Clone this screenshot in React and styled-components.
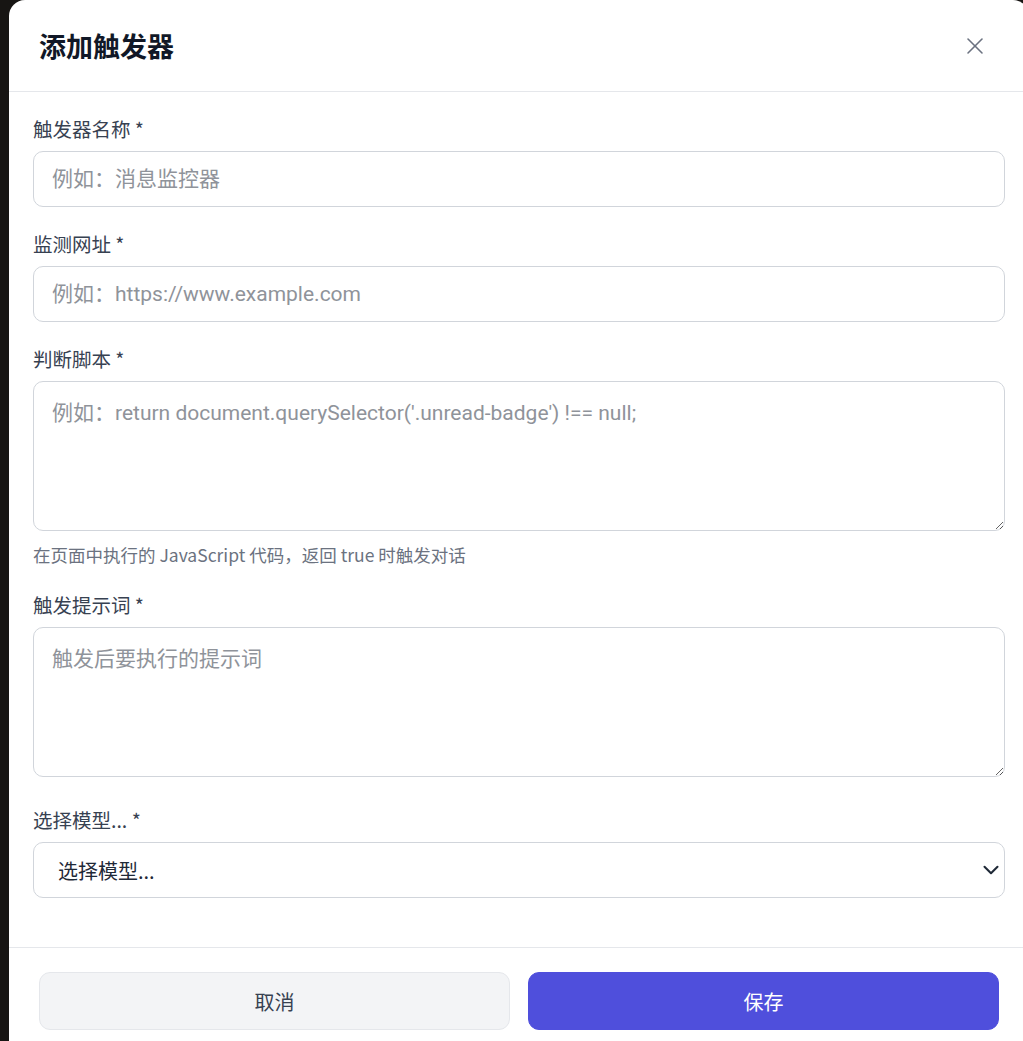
import React from "react";
import styled, { createGlobalStyle } from "styled-components";
import { X, ChevronDown } from "lucide-react";

const Global = createGlobalStyle`
  html, body { margin: 0; padding: 0; }
  body {
    background: #171513;
    overflow: hidden;
    font-family: "Noto Sans", "Noto Sans CJK SC", sans-serif;
  }
  * { box-sizing: border-box; }
`;

const Page = styled.div`
  height: 1041px;
  padding-left: 9px;
  overflow: hidden;
`;

const Modal = styled.div`
  width: 1020px;
  background: #ffffff;
  border-radius: 16px;
  display: flex;
  flex-direction: column;
`;

const Header = styled.header`
  height: 92px;
  border-bottom: 1px solid #e5e7eb;
  display: flex;
  align-items: center;
  justify-content: space-between;
  padding: 0 40px 0 30px;
`;

const Title = styled.h2`
  margin: 0;
  font-family: "Noto Sans CJK SC", sans-serif;
  font-size: 27px;
  font-weight: 700;
  color: #111827;
  line-height: 36px;
`;

const CloseButton = styled.button`
  border: none;
  background: transparent;
  padding: 0;
  width: 28px;
  height: 28px;
  display: flex;
  align-items: center;
  justify-content: center;
  color: #6b7280;
  cursor: pointer;
`;

const Body = styled.div`
  padding: 23px 24px 49px;
  display: flex;
  flex-direction: column;
`;

const Field = styled.div`
  display: flex;
  flex-direction: column;
  margin-bottom: ${(p) => p.$gap ?? 23}px;
`;

const Label = styled.label`
  font-family: "Noto Sans CJK SC", sans-serif;
  font-size: 19.5px;
  line-height: 28px;
  color: #374151;
  margin-bottom: 8px;
`;

const fieldBase = `
  width: 100%;
  border: 1px solid #d1d5db;
  border-radius: 10px;
  background: #fff;
  font-family: Roboto, "Noto Sans CJK SC", sans-serif;
  font-size: 21px;
  color: #1f2937;
  outline: none;
  &::placeholder { color: #8f939a; }
`;

const Input = styled.input`
  ${fieldBase}
  height: 56px;
  padding: 0 18px;
`;

const TextArea = styled.textarea`
  ${fieldBase}
  display: block;
  height: 150px;
  padding: 17px 18px;
  line-height: 28px;
  resize: vertical;
`;

const Help = styled.p`
  margin: 12px 0 0;
  font-family: "Noto Sans CJK SC", sans-serif;
  font-size: 17.5px;
  line-height: 24px;
  color: #6b7280;
`;

const SelectWrap = styled.div`
  position: relative;
`;

const Select = styled.select`
  ${fieldBase}
  appearance: none;
  -webkit-appearance: none;
  height: 56px;
  padding: 0 40px 0 24px;
  font-family: "Noto Sans CJK SC", sans-serif;
  font-size: 20px;
`;

const Chevron = styled.span`
  position: absolute;
  right: 1px;
  top: 15px;
  width: 26px;
  height: 26px;
  display: flex;
  color: #1f2937;
  pointer-events: none;
`;

const Footer = styled.footer`
  border-top: 1px solid #e5e7eb;
  padding: 24px 30px 26px;
  display: flex;
  gap: 18px;
`;

const Button = styled.button`
  flex: 1;
  height: 58px;
  border-radius: 11px;
  font-family: "Noto Sans CJK SC", sans-serif;
  font-size: 20px;
  cursor: pointer;
  border: 1px solid ${(p) => (p.$primary ? "#4f4fdc" : "#e5e7eb")};
  background: ${(p) => (p.$primary ? "#4f4fdc" : "#f3f4f6")};
  color: ${(p) => (p.$primary ? "#ffffff" : "#374151")};
`;

export default function App() {
  return (
    <Page>
      <Global />
      <Modal>
        <Header>
          <Title>添加触发器</Title>
          <CloseButton aria-label="关闭">
            <X size={28} strokeWidth={1.3} />
          </CloseButton>
        </Header>
        <Body>
          <Field>
            <Label>触发器名称 *</Label>
            <Input placeholder="例如：消息监控器" />
          </Field>
          <Field>
            <Label>监测网址 *</Label>
            <Input placeholder="例如：https://www.example.com" />
          </Field>
          <Field $gap={24}>
            <Label>判断脚本 *</Label>
            <TextArea placeholder="例如：return document.querySelector('.unread-badge') !== null;" />
            <Help>在页面中执行的 JavaScript 代码，返回 true 时触发对话</Help>
          </Field>
          <Field $gap={29}>
            <Label>触发提示词 *</Label>
            <TextArea placeholder="触发后要执行的提示词" />
          </Field>
          <Field $gap={0}>
            <Label>选择模型... *</Label>
            <SelectWrap>
              <Select defaultValue="">
                <option value="">选择模型...</option>
              </Select>
              <Chevron>
                <ChevronDown size={26} strokeWidth={1.9} />
              </Chevron>
            </SelectWrap>
          </Field>
        </Body>
        <Footer>
          <Button>取消</Button>
          <Button $primary>保存</Button>
        </Footer>
      </Modal>
    </Page>
  );
}
